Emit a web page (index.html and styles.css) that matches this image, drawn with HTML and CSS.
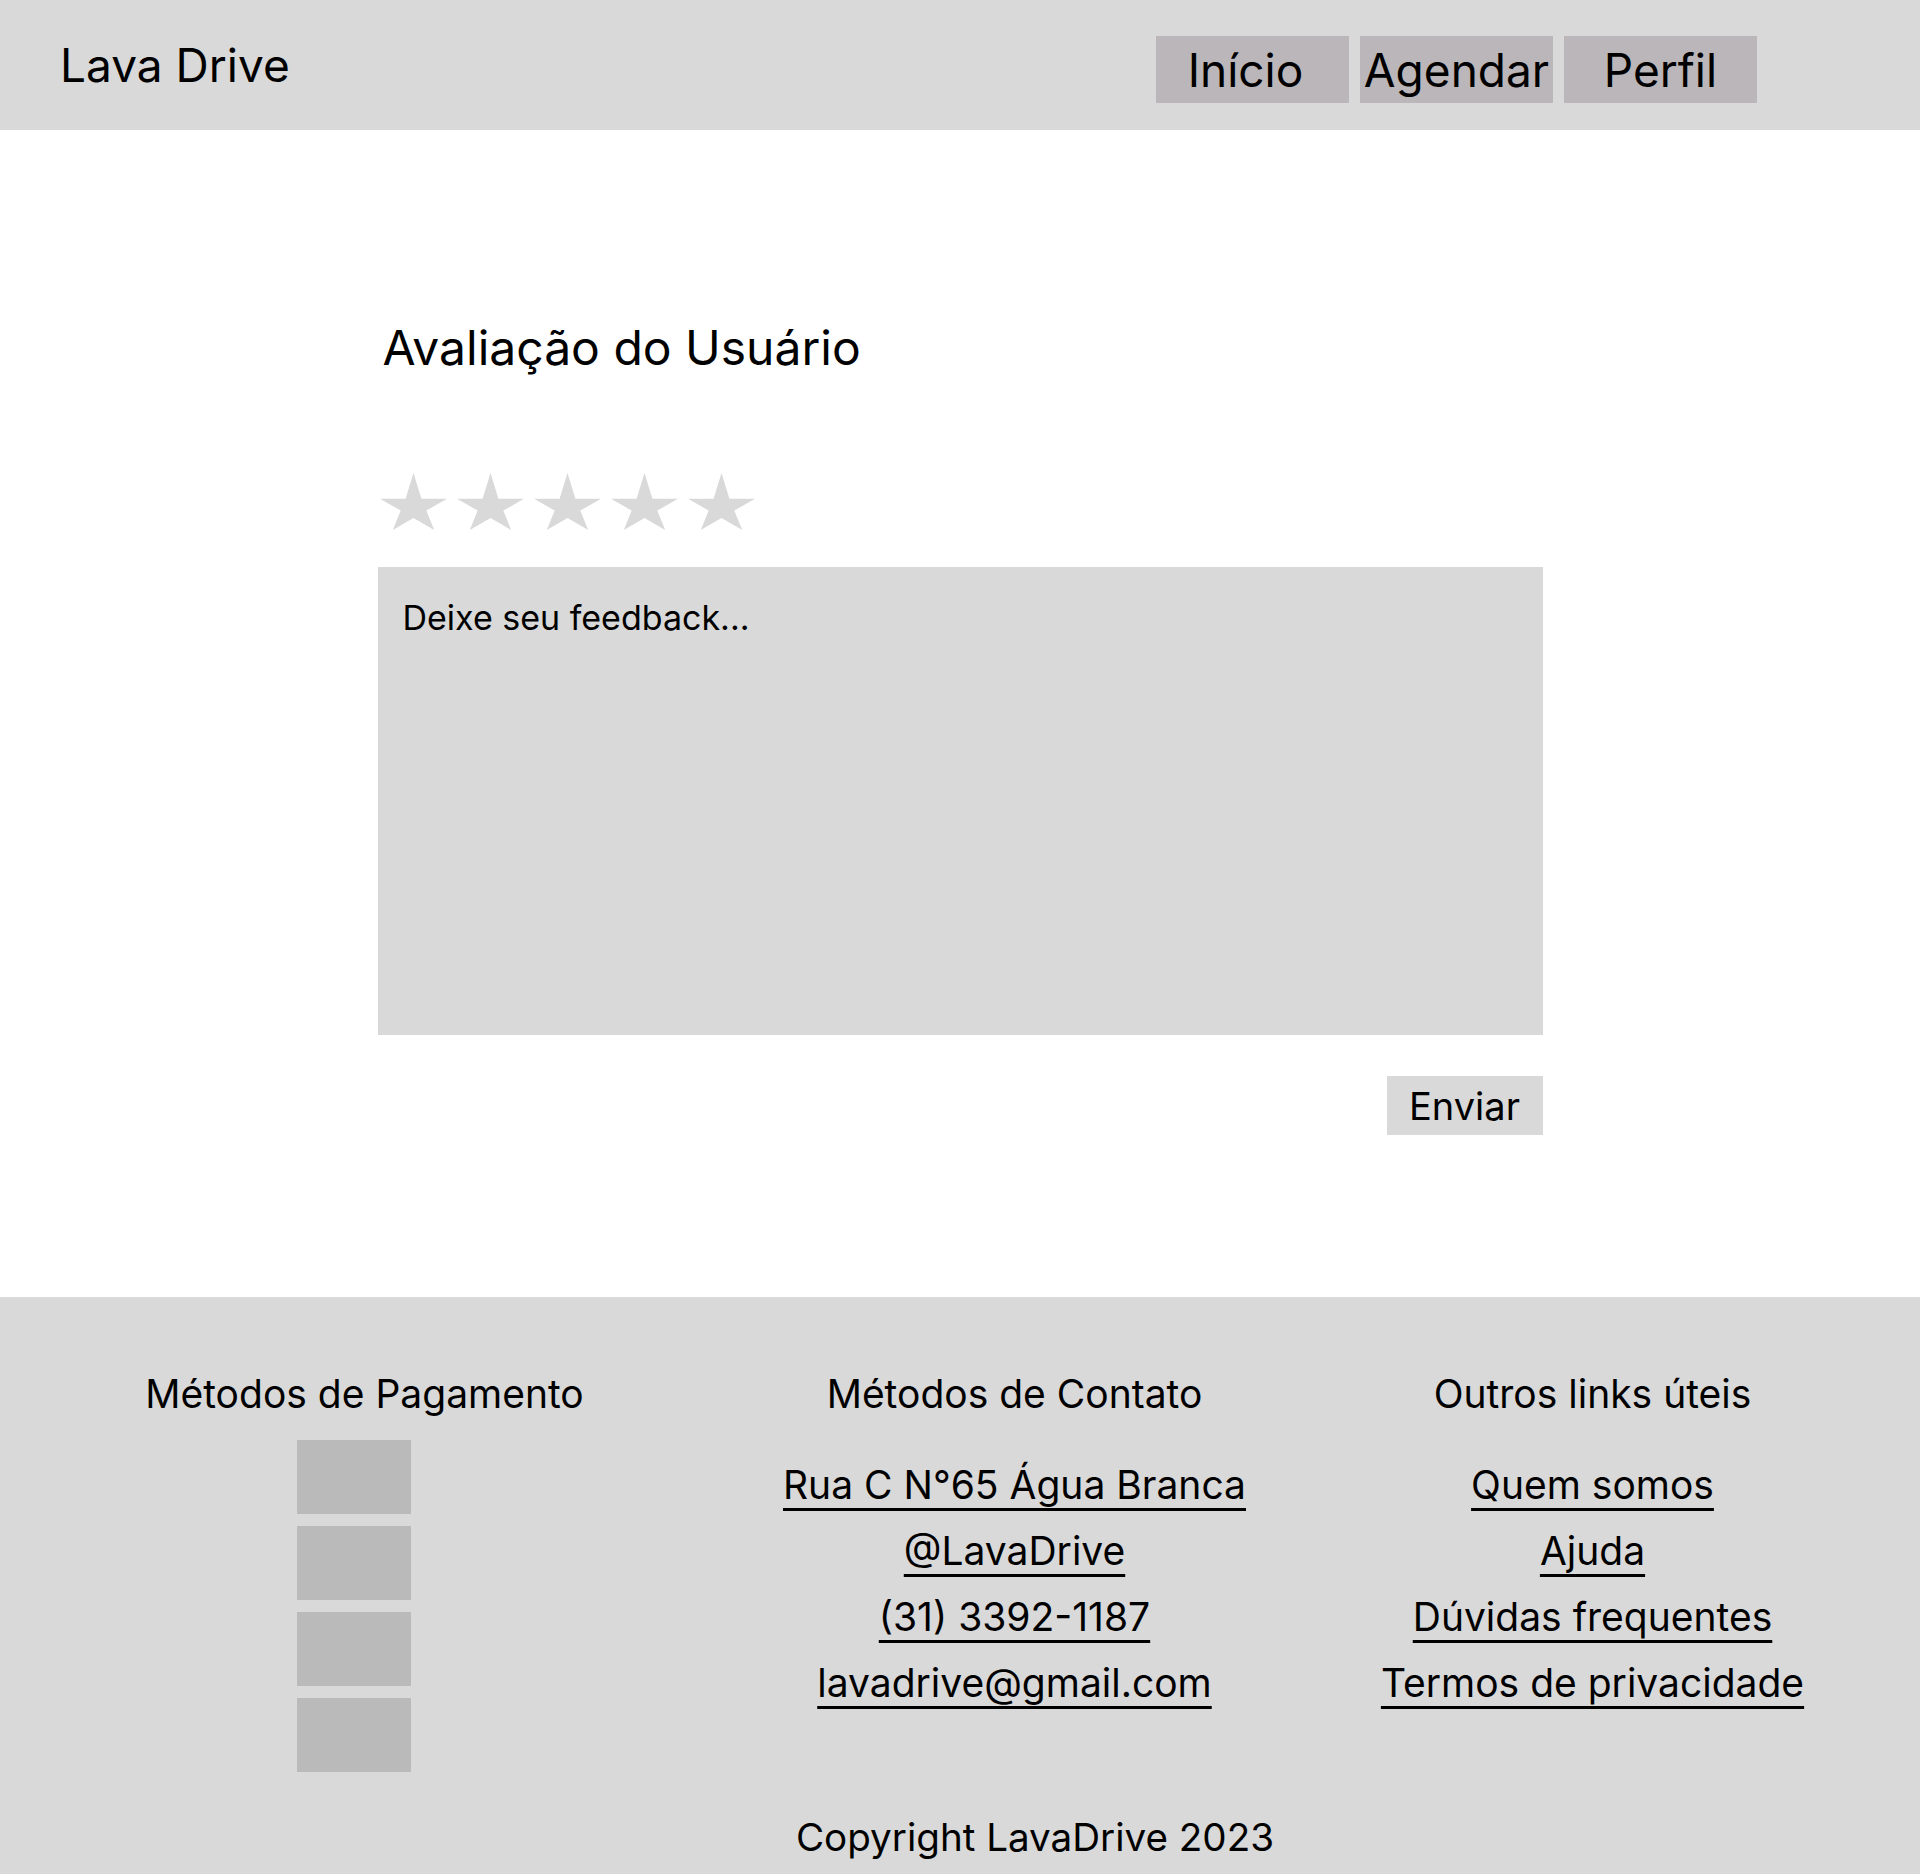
FILE: index.html
```html
<!DOCTYPE html>
<html lang="pt-BR">
<head>
<meta charset="utf-8">
<title>Lava Drive - Avaliação</title>
<link rel="stylesheet" href="styles.css">
</head>
<body>
<header class="topbar">
  <div class="logo">Lava Drive</div>
  <nav class="nav">
    <a class="nav-btn nav-btn-home" href="#">Início</a>
    <a class="nav-btn" href="#">Agendar</a>
    <a class="nav-btn" href="#">Perfil</a>
  </nav>
</header>

<main class="review">
  <h1 class="review-title">Avaliação do Usuário</h1>
  <div class="stars">
    <svg class="star" viewBox="0 0 100 100" preserveAspectRatio="none"><polygon points="50,0 61.8,45 100,45 69.1,66 80.9,100 50,79 19.1,100 30.9,66 0,45 38.2,45"/></svg>
    <svg class="star" viewBox="0 0 100 100" preserveAspectRatio="none"><polygon points="50,0 61.8,45 100,45 69.1,66 80.9,100 50,79 19.1,100 30.9,66 0,45 38.2,45"/></svg>
    <svg class="star" viewBox="0 0 100 100" preserveAspectRatio="none"><polygon points="50,0 61.8,45 100,45 69.1,66 80.9,100 50,79 19.1,100 30.9,66 0,45 38.2,45"/></svg>
    <svg class="star" viewBox="0 0 100 100" preserveAspectRatio="none"><polygon points="50,0 61.8,45 100,45 69.1,66 80.9,100 50,79 19.1,100 30.9,66 0,45 38.2,45"/></svg>
    <svg class="star" viewBox="0 0 100 100" preserveAspectRatio="none"><polygon points="50,0 61.8,45 100,45 69.1,66 80.9,100 50,79 19.1,100 30.9,66 0,45 38.2,45"/></svg>
  </div>
  <textarea class="feedback" placeholder="Deixe seu feedback..."></textarea>
  <div class="actions">
    <button class="send-btn" type="button">Enviar</button>
  </div>
</main>

<footer class="footer">
  <div class="footer-cols">
    <section class="footer-col">
      <h2 class="footer-title">Métodos de Pagamento</h2>
      <div class="pay-list">
        <div class="pay-box"></div>
        <div class="pay-box"></div>
        <div class="pay-box"></div>
        <div class="pay-box"></div>
      </div>
    </section>
    <section class="footer-col">
      <h2 class="footer-title">Métodos de Contato</h2>
      <ul class="link-list">
        <li><a href="#">Rua C N°65 Água Branca</a></li>
        <li><a href="#">@LavaDrive</a></li>
        <li><a href="#">(31) 3392-1187</a></li>
        <li><a href="#">lavadrive@gmail.com</a></li>
      </ul>
    </section>
    <section class="footer-col">
      <h2 class="footer-title">Outros links úteis</h2>
      <ul class="link-list">
        <li><a href="#">Quem somos</a></li>
        <li><a href="#">Ajuda</a></li>
        <li><a href="#">Dúvidas frequentes</a></li>
        <li><a href="#">Termos de privacidade</a></li>
      </ul>
    </section>
  </div>
  <p class="copyright">Copyright LavaDrive 2023</p>
</footer>
</body>
</html>
```

FILE: styles.css
```css
* {
  box-sizing: border-box;
}

html, body {
  margin: 0;
  padding: 0;
}

body {
  font-family: "Inter", "Liberation Sans", sans-serif;
  color: #000;
  background: #fff;
  width: 1920px;
}

/* Header */
.topbar {
  height: 130px;
  background: #d9d9d9;
  display: flex;
  align-items: center;
  padding: 0 163px 0 60px;
}

.logo {
  font-size: 46px;
  line-height: 58px;
}

.nav {
  margin-left: auto;
  align-self: flex-start;
  margin-top: 36px;
  display: flex;
  gap: 11px;
}

.nav-btn {
  width: 193px;
  height: 67px;
  background: #bab6b9;
  color: #000;
  text-decoration: none;
  font-size: 46px;
  line-height: 58px;
  display: flex;
  align-items: center;
  justify-content: center;
  white-space: nowrap;
}

.nav-btn-home {
  padding-right: 14px;
}

/* Review */
.review {
  width: 1165px;
  margin: 0 auto;
  padding: 189px 0 162px;
}

.review-title {
  margin: 0;
  padding-left: 5px;
  font-size: 48px;
  line-height: 58px;
  font-weight: 400;
}

.stars {
  margin-top: 96px;
  padding-left: 2px;
  display: flex;
  gap: 10px;
  height: 57px;
}

.star {
  width: 67px;
  height: 57px;
  fill: #d9d9d9;
  display: block;
}

.feedback {
  display: block;
  margin-top: 37px;
  width: 100%;
  height: 468px;
  background: #d9d9d9;
  border: none;
  outline: none;
  resize: none;
  padding: 28px 25px;
  font-family: "Inter", "Liberation Sans", sans-serif;
  font-size: 34px;
  line-height: 46px;
  color: #000;
}

.feedback::placeholder {
  color: #000;
  opacity: 1;
}

.actions {
  margin-top: 41px;
  display: flex;
  justify-content: flex-end;
}

.send-btn {
  width: 156px;
  height: 59px;
  background: #d9d9d9;
  border: none;
  padding: 0;
  font-family: "Inter", "Liberation Sans", sans-serif;
  font-size: 38px;
  line-height: 46px;
  color: #000;
}

/* Footer */
.footer {
  background: #d9d9d9;
  padding: 74px 0 13px;
}

.footer-cols {
  display: grid;
  grid-template-columns: 729px 571px 585px;
}

.footer-col {
  display: flex;
  flex-direction: column;
  align-items: center;
  text-align: center;
}

.footer-title {
  margin: 0;
  font-size: 39px;
  line-height: 46px;
  font-weight: 400;
  white-space: nowrap;
}

.pay-list {
  margin-top: 23px;
  margin-right: 21px;
  display: flex;
  flex-direction: column;
  gap: 12px;
}

.pay-box {
  width: 114px;
  height: 74px;
  background: #bababa;
}

.link-list {
  list-style: none;
  margin: 35px 0 0;
  padding: 0;
}

.link-list li {
  font-size: 39px;
  line-height: 66px;
  white-space: nowrap;
}

.link-list a {
  color: #000;
  text-decoration: underline;
  text-decoration-thickness: 3px;
  text-underline-offset: 9px;
}

.copyright {
  margin: 41px 0 0;
  padding-left: 150px;
  text-align: center;
  font-size: 38.6px;
  line-height: 48px;
}
```
